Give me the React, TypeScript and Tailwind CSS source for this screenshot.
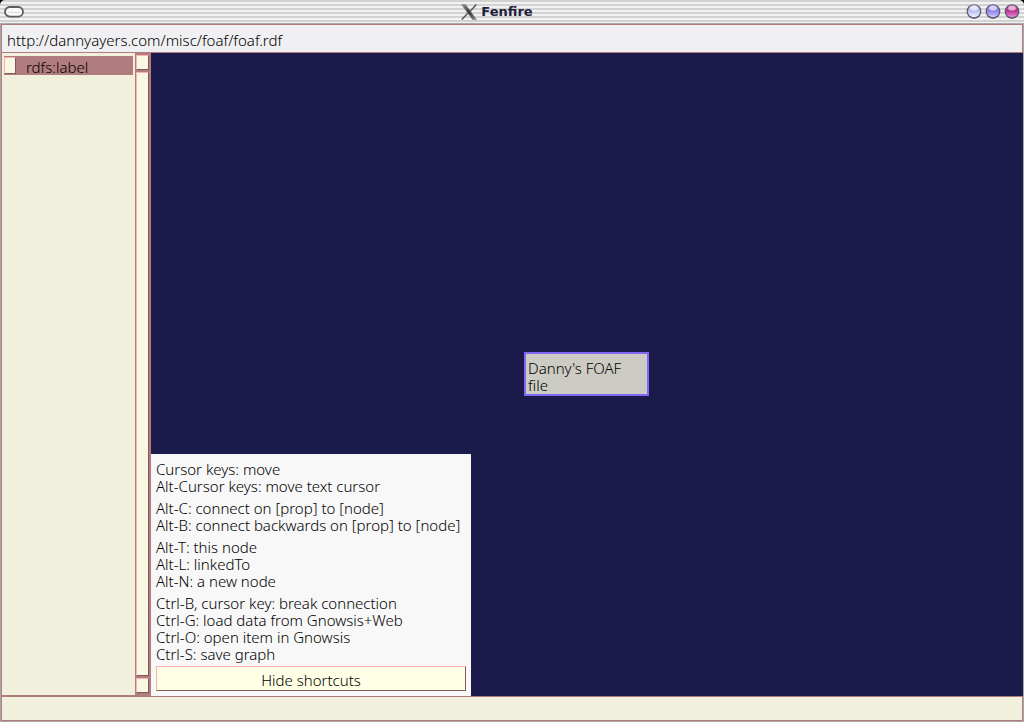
import React from "react";

const shortcutGroups: string[][] = [
  ["Cursor keys: move", "Alt-Cursor keys: move text cursor"],
  ["Alt-C: connect on [prop] to [node]", "Alt-B: connect backwards on [prop] to [node]"],
  ["Alt-T: this node", "Alt-L: linkedTo", "Alt-N: a new node"],
  [
    "Ctrl-B, cursor key: break connection",
    "Ctrl-G: load data from Gnowsis+Web",
    "Ctrl-O: open item in Gnowsis",
    "Ctrl-S: save graph",
  ],
];

const bevel = "border border-t-[#ffb0b0] border-r-[#84585a] border-b-[#84585a] border-l-[#ffb0b0]";

function Orb({ id, label, light, mid, dark }: { id: string; label: string; light: string; mid: string; dark: string }) {
  return (
    <button type="button" aria-label={label} className="block size-4">
      <svg viewBox="0 0 16 16" className="block size-4">
        <defs>
          <linearGradient id={id} x1="0" y1="0" x2="0" y2="1">
            <stop offset="0" stopColor={mid} />
            <stop offset="0.45" stopColor={dark} />
            <stop offset="1" stopColor={light} />
          </linearGradient>
        </defs>
        <circle cx="8" cy="7.6" r="7.4" fill="#45455a" opacity="0.85" />
        <circle cx="8" cy="7.2" r="6.1" fill={`url(#${id})`} />
        <ellipse cx="8" cy="4.2" rx="3.8" ry="2.4" fill="#fff" opacity="0.6" />
      </svg>
    </button>
  );
}

function TitleBar() {
  return (
    <header className="shrink-0 bg-black">
      <div className="flex h-6 items-center justify-between rounded-t-[5px] border-b border-[#a8a8a8] bg-[repeating-linear-gradient(to_bottom,#d2d2d2_0px,#d2d2d2_2px,#f2f2f2_2px,#f2f2f2_4px)] px-1">
        <button type="button" aria-label="Window menu" className="block pr-1">
          <svg viewBox="0 0 20 12" className="block h-3 w-5">
            <rect x="1" y="1" width="18" height="9.6" rx="4.8" fill="#f8f8f8" stroke="#5c5c5c" strokeWidth="1.8" />
            <path d="M4 6.5h12" stroke="#dcdcdc" />
          </svg>
        </button>
        <div className="flex items-center gap-1">
          <svg viewBox="0 0 16 16" className="block size-4">
            <defs>
              <linearGradient id="x-thick" x1="0" y1="0" x2="1" y2="1">
                <stop offset="0" stopColor="#9a9a9a" />
                <stop offset="0.5" stopColor="#333" />
                <stop offset="1" stopColor="#8a8a8a" />
              </linearGradient>
            </defs>
            <path d="M0.5 0.5h4L15.5 15.5h-4z" fill="url(#x-thick)" stroke="#777" strokeWidth="0.5" />
            <path d="M15.3 0.5L9.2 7.2M6.8 9.2L0.8 15.5" stroke="#555" strokeWidth="1.5" />
          </svg>
          <h1 className="font-['DejaVu_Sans',sans-serif] text-[13px] leading-4 font-bold text-[#20203c]">Fenfire</h1>
        </div>
        <div className="flex gap-[3px]">
          <Orb id="orb-min" label="Minimize" light="#f2f4ff" mid="#c6ccf4" dark="#b4bcf0" />
          <Orb id="orb-max" label="Maximize" light="#d2ccff" mid="#a49af0" dark="#8a7ee6" />
          <Orb id="orb-close" label="Close" light="#f08ad8" mid="#c050a0" dark="#b8308f" />
        </div>
      </div>
    </header>
  );
}

function Sidebar() {
  return (
    <aside className="flex w-[149px] shrink-0 bg-[#b07c7e] pb-px">
      <div className="flex-1 bg-[#f1f0dc] px-0.5 py-[3px]">
        <label className="flex h-[19px] items-center gap-2.5 bg-[#b07c7e]">
          <input type="checkbox" className={`h-[17px] w-3 shrink-0 appearance-none bg-[#f9f8e2] ${bevel}`} />
          <span className="pt-1">rdfs:label</span>
        </label>
      </div>
      <div className="flex w-4 shrink-0 flex-col gap-0.5 pt-0.5 pr-0.5 pb-0.5 pl-px">
        <button type="button" aria-label="Scroll up" className={`h-[15px] bg-[#f9f8e2] ${bevel}`} />
        <button type="button" aria-label="Scroll position" className={`flex-1 bg-[#f9f8e2] ${bevel}`} />
        <button type="button" aria-label="Scroll down" className={`h-[15px] bg-[#f9f8e2] ${bevel}`} />
      </div>
    </aside>
  );
}

function Shortcuts() {
  return (
    <section className="absolute bottom-0 left-0 flex w-80 flex-col gap-[3px] bg-[#f8f8f8] px-[5px] pt-[7px] pb-[5px]">
      <div className="flex flex-col gap-[5px]">
        {shortcutGroups.map((group) => (
          <ul key={group[0]}>
            {group.map((line) => (
              <li key={line} className="whitespace-nowrap">{line}</li>
            ))}
          </ul>
        ))}
      </div>
      <button type="button" className={`h-[25px] bg-[#ffffe6] pt-[3px] ${bevel}`}>
        Hide shortcuts
      </button>
    </section>
  );
}

export default function App() {
  return (
    <div className="flex h-screen flex-col bg-[#a8a8a8] font-['Noto_Sans',sans-serif] text-[15px] leading-[17px] font-light text-black">
      <TitleBar />
      <div className="mx-px mb-px flex min-h-0 flex-1 flex-col border border-[#b07c7e] bg-[#b07c7e]">
        <input
          aria-label="Address"
          defaultValue="http://dannyayers.com/misc/foaf/foaf.rdf"
          className="h-[27px] shrink-0 bg-[#f0f0f3] px-[5px] pt-0.5 outline-none"
        />
        <div className="flex min-h-0 flex-1 pt-px">
          <Sidebar />
          <main className="relative -mr-px flex-1 bg-[#1a1a4b]">
            <div className="absolute top-[299px] left-[373px] w-[125px] border-2 border-[#8266f6] bg-[#cdccc4] pt-1.5 pr-4 pl-0.5">
              Danny's FOAF file
            </div>
            <Shortcuts />
          </main>
        </div>
        <footer className="mt-px h-[23px] shrink-0 bg-[#f1f0dc]" />
      </div>
    </div>
  );
}
